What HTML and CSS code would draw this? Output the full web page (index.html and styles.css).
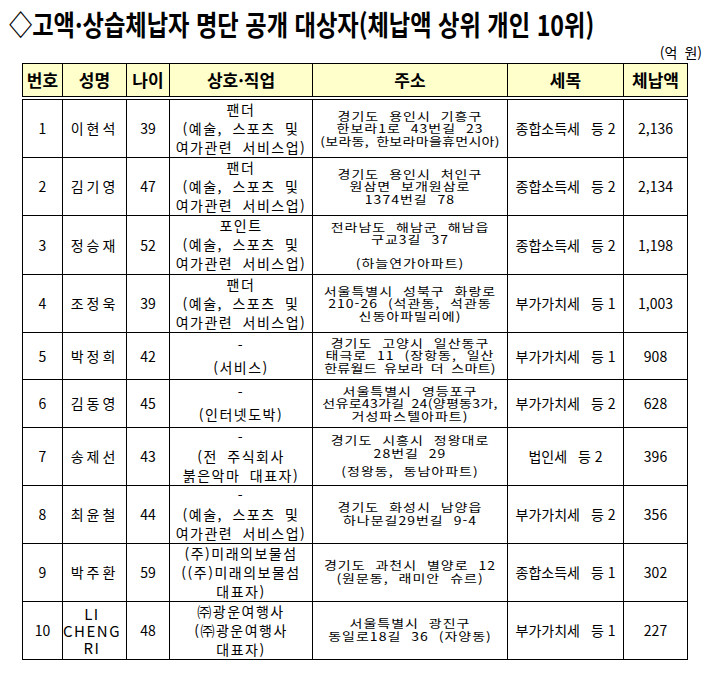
FILE: index.html
```html
<!DOCTYPE html>
<html lang="ko">
<head>
<meta charset="utf-8">
<title>고액·상습체납자 명단 공개 대상자</title>
<link rel="stylesheet" href="styles.css">
</head>
<body>
<div class="page">
  <h1 class="title"><span class="title-text">◇고액·상습체납자 명단 공개 대상자(체납액 상위 개인 10위)</span></h1>
  <div class="unit">(억 원)</div>
  <table class="list">
    <colgroup>
      <col class="c-no"><col class="c-name"><col class="c-age"><col class="c-biz"><col class="c-addr"><col class="c-tax"><col class="c-amt">
    </colgroup>
    <thead>
      <tr class="head"><th>번호</th><th>성명</th><th>나이</th><th>상호·직업</th><th>주소</th><th>세목</th><th>체납액</th></tr>
    </thead>
    <tbody>
      <tr class="r1">
        <td class="no">1</td><td class="name">이현석</td><td class="age">39</td>
        <td class="biz">팬더<br>(예술, 스포츠 및<br>여가관련 서비스업)</td>
        <td class="addr up12"><div class="addr-in">경기도 용인시 기흥구<br>한보라1로 43번길 23<br><span class="tight">(보라동, 한보라마을휴먼시아)</span></div></td>
        <td class="tax">종합소득세<i class="g"></i>등 2</td><td class="amt">2,136</td>
      </tr>
      <tr class="r2">
        <td class="no">2</td><td class="name">김기영</td><td class="age">47</td>
        <td class="biz">팬더<br>(예술, 스포츠 및<br>여가관련 서비스업)</td>
        <td class="addr up16"><div class="addr-in">경기도 용인시 처인구<br>원삼면 보개원삼로<br>1374번길 78</div></td>
        <td class="tax">종합소득세<i class="g"></i>등 2</td><td class="amt">2,134</td>
      </tr>
      <tr class="r3">
        <td class="no">3</td><td class="name">정승재</td><td class="age">52</td>
        <td class="biz">포인트<br>(예술, 스포츠 및<br>여가관련 서비스업)</td>
        <td class="addr up6"><div class="addr-in"><div>전라남도 해남군 해남읍</div><div>구교3길 37</div><div class="sep12">(하늘연가아파트)</div></div></td>
        <td class="tax">종합소득세<i class="g"></i>등 2</td><td class="amt">1,198</td>
      </tr>
      <tr class="r4">
        <td class="no">4</td><td class="name">조정욱</td><td class="age">39</td>
        <td class="biz">팬더<br>(예술, 스포츠 및<br>여가관련 서비스업)</td>
        <td class="addr up9"><div class="addr-in">서울특별시 성북구 화랑로<br>210-26 (석관동, 석관동<br>신동아파밀리에)</div></td>
        <td class="tax">부가가치세<i class="g"></i>등 1</td><td class="amt">1,003</td>
      </tr>
      <tr class="r5">
        <td class="no">5</td><td class="name">박정희</td><td class="age">42</td>
        <td class="biz wide">-<br>(서비스)</td>
        <td class="addr"><div class="addr-in">경기도 고양시 일산동구<br>태극로 11 (장항동, 일산<br><span class="tight">한류월드 유보라 더 스마트)</span></div></td>
        <td class="tax">부가가치세<i class="g"></i>등 1</td><td class="amt">908</td>
      </tr>
      <tr class="r6">
        <td class="no">6</td><td class="name">김동영</td><td class="age">45</td>
        <td class="biz wide">-<br>(인터넷도박)</td>
        <td class="addr"><div class="addr-in">서울특별시 영등포구<br><span class="tight">선유로43가길 24(양평동3가,</span><br>거성파스텔아파트)</div></td>
        <td class="tax">부가가치세<i class="g"></i>등 2</td><td class="amt">628</td>
      </tr>
      <tr class="r7">
        <td class="no">7</td><td class="name">송제선</td><td class="age">43</td>
        <td class="biz">-<br>(전 주식회사<br>붉은악마 대표자)</td>
        <td class="addr up9"><div class="addr-in"><div>경기도 시흥시 정왕대로</div><div>28번길 29</div><div class="sep6">(정왕동, 동남아파트)</div></div></td>
        <td class="tax">법인세<i class="g"></i>등 2</td><td class="amt">396</td>
      </tr>
      <tr class="r8">
        <td class="no">8</td><td class="name">최윤철</td><td class="age">44</td>
        <td class="biz">-<br>(예술, 스포츠 및<br>여가관련 서비스업)</td>
        <td class="addr"><div class="addr-in">경기도 화성시 남양읍<br>하나문길29번길 9-4</div></td>
        <td class="tax">부가가치세<i class="g"></i>등 2</td><td class="amt">356</td>
      </tr>
      <tr class="r9">
        <td class="no">9</td><td class="name">박주환</td><td class="age">59</td>
        <td class="biz">(주)미래의보물섬<br>((주)미래의보물섬<br>대표자)</td>
        <td class="addr"><div class="addr-in">경기도 과천시 별양로 12<br>(원문동, 래미안 슈르)</div></td>
        <td class="tax">종합소득세<i class="g"></i>등 1</td><td class="amt">302</td>
      </tr>
      <tr class="r10">
        <td class="no">10</td><td class="name en">LI<br>CHENG<br>RI</td><td class="age">48</td>
        <td class="biz">㈜광운여행사<br>(㈜광운여행사<br>대표자)</td>
        <td class="addr"><div class="addr-in">서울특별시 광진구<br>동일로18길 36 (자양동)</div></td>
        <td class="tax">부가가치세<i class="g"></i>등 1</td><td class="amt">227</td>
      </tr>
    </tbody>
  </table>
</div>
</body>
</html>
```

FILE: styles.css
```css
html, body {
  margin: 0;
  padding: 0;
  background: #ffffff;
}

body {
  font-family: "Noto Sans CJK KR", "Noto Sans", sans-serif;
  color: #000000;
}

.page {
  width: 705px;
  height: 673px;
  padding-top: 8px;
  box-sizing: border-box;
  overflow: hidden;
}

.title {
  margin: 0 0 0 9px;
  height: 32px;
  font-size: 28px;
  line-height: 32px;
  font-weight: 700;
  white-space: nowrap;
}

.title-text {
  display: inline-block;
  transform: scaleX(0.83);
  transform-origin: left center;
}

.unit {
  height: 20px;
  margin-top: 3px;
  padding-right: 3px;
  text-align: right;
  font-size: 14px;
  line-height: 18px;
  word-spacing: 3px;
}

.list {
  margin-left: 22px;
  border-collapse: collapse;
  table-layout: fixed;
  width: 665px;
}

.c-no { width: 40px; }
.c-name { width: 64px; }
.c-age { width: 43px; }
.c-biz { width: 143px; }
.c-addr { width: 195px; }
.c-tax { width: 116px; }
.c-amt { width: 64px; }

.list th,
.list td {
  border: 1px solid #000000;
  padding: 0;
  text-align: center;
  vertical-align: middle;
  white-space: nowrap;
  overflow: hidden;
}

.list th {
  background: #ffffcc;
  font-size: 17px;
  font-weight: 700;
  border-bottom: 4px double #000000;
}

.head { height: 34px; }
.r1 { height: 56px; }
.r2 { height: 57px; }
.r3 { height: 58px; }
.r4 { height: 56px; }
.r5 { height: 47px; }
.r6 { height: 48px; }
.r7 { height: 57px; }
.r8 { height: 57px; }
.r9 { height: 56px; }
.r10 { height: 58px; }

.list td {
  font-size: 14px;
}

.name {
  letter-spacing: 3px;
  padding-right: 6px;
}

.name.en {
  font-size: 15px;
  letter-spacing: 1.5px;
  line-height: 17px;
  padding-right: 5px;
}

.biz {
  line-height: 19px;
  letter-spacing: 1.5px;
  word-spacing: 4px;
}

.biz.wide {
  line-height: 22px;
}

.addr {
  letter-spacing: 1px;
  word-spacing: 5px;
}

.addr-in {
  line-height: 15px;
  transform: scaleY(0.84);
}

.tight {
  letter-spacing: 0.3px;
  word-spacing: 3px;
}

.up6 { padding-bottom: 6px; }
.up9 { padding-bottom: 9px; }
.up12 { padding-bottom: 12px; }
.up16 { padding-bottom: 16px; }

.sep6 { margin-top: 7px; }
.sep12 { margin-top: 13px; }

.tax {
  font-size: 13.5px;
}

.g {
  display: inline-block;
  width: 11px;
}
```
